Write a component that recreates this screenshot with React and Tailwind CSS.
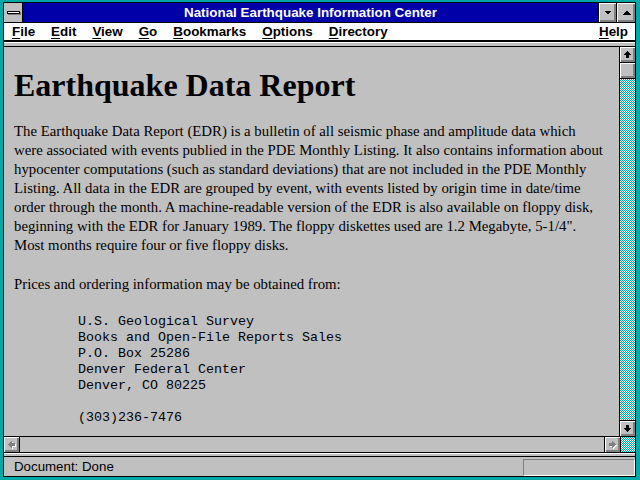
import React from 'react';

const ui = { fontFamily: '"Liberation Sans", Arial, sans-serif' };
const serif = { fontFamily: '"Liberation Serif", "Times New Roman", serif' };
const mono = { fontFamily: '"Liberation Mono", "Courier New", monospace' };

const raised = 'bg-[#c0c0c0] shadow-[inset_1px_1px_0_#ffffff,inset_-1px_-1px_0_#808080,inset_-2px_-2px_0_#808080]';
const dither = 'bg-[image:repeating-conic-gradient(#00a8a8_0%_25%,#ffffff_0%_50%)] bg-[length:2px_2px]';

const Arrow = ({ dir, disabled }) => {
  const paths = {
    up: 'M3.5 8 L7.5 4 L11.5 8 H9 V11 H6 V8 Z',
    down: 'M3.5 7 L7.5 11 L11.5 7 H9 V4 H6 V7 Z',
    left: 'M8 3.5 L4 7.5 L8 11.5 V9 H11 V6 H8 Z',
    right: 'M7 3.5 L11 7.5 L7 11.5 V9 H4 V6 H7 Z',
  };
  return (
    <svg width="15" height="15" viewBox="0 0 15 15" shapeRendering="crispEdges">
      {disabled && <path d={paths[dir]} fill="#ffffff" transform="translate(1 1)" />}
      <path d={paths[dir]} fill={disabled ? '#808080' : '#000000'} />
    </svg>
  );
};

const Tri = ({ up }) => (
  <svg width="9" height="5" viewBox="0 0 9 5" shapeRendering="crispEdges">
    <path d={up ? 'M0.5 4.5 L4.5 0.5 L8.5 4.5 Z' : 'M0.5 0.5 L4.5 4.5 L8.5 0.5 Z'} fill="#000000" />
  </svg>
);

const MenuItem = ({ k, rest }) => (
  <span className="whitespace-nowrap">
    <span className="underline underline-offset-2">{k}</span>
    {rest}
  </span>
);

const paragraph = [
  'The Earthquake Data Report (EDR) is a bulletin of all seismic phase and amplitude data which',
  'were associated with events publied in the PDE Monthly Listing. It also contains information about',
  'hypocenter computations (such as standard deviations) that are not included in the PDE Monthly',
  'Listing. All data in the EDR are grouped by event, with events listed by origin time in date/time',
  'order through the month. A machine-readable version of the EDR is also available on floppy disk,',
  'beginning with the EDR for January 1989. The floppy diskettes used are 1.2 Megabyte, 5-1/4".',
  'Most months require four or five floppy disks.',
];

const address = [
  'U.S. Geological Survey',
  'Books and Open-File Reports Sales',
  'P.O. Box 25286',
  'Denver Federal Center',
  'Denver, CO 80225',
  '\u00a0',
  '(303)236-7476',
];

export default function App() {
  return (
    <div className="w-[640px] h-[480px] bg-[#00a8a8] pt-[2px] pl-[3px] pr-[4px] pb-[3px] overflow-hidden">
      <div className="h-full border border-black flex flex-col bg-[#c0c0c0]" style={ui}>
        {/* Title bar */}
        <div className="h-[20px] shrink-0 flex border-b border-black">
          <div className="w-[19px] border-r border-black bg-[#c0c0c0] flex items-center justify-center">
            <div className="w-[13px] h-[3px] bg-white border border-black shadow-[1px_1px_0_#808080]" />
          </div>
          <div className="flex-1 bg-[#0000a8] text-white font-bold text-[13.4px] leading-[19px] text-center whitespace-nowrap">
            National Earthquake Information Center
          </div>
          <div className={`w-[18px] border-l border-black flex items-center justify-center ${raised}`}>
            <Tri />
          </div>
          <div className={`w-[19px] border-l border-black flex items-center justify-center ${raised}`}>
            <Tri up />
          </div>
        </div>

        {/* Menu bar */}
        <div className="h-[18px] shrink-0 bg-white border-b border-black flex items-center gap-[16px] pl-[8px] pr-[7px] text-[13.4px] font-bold text-black leading-[17px]">
          <MenuItem k="F" rest="ile" />
          <MenuItem k="E" rest="dit" />
          <MenuItem k="V" rest="iew" />
          <MenuItem k="G" rest="o" />
          <MenuItem k="B" rest="ookmarks" />
          <MenuItem k="O" rest="ptions" />
          <MenuItem k="D" rest="irectory" />
          <span className="ml-auto">
            <MenuItem k="H" rest="elp" />
          </span>
        </div>

        {/* Toolbar separator */}
        <div className="h-[6px] shrink-0 border-t border-black bg-[#c0c0c0] shadow-[inset_0_1px_0_#ffffff] border-b border-b-black" />

        {/* Content + vertical scrollbar */}
        <div className="flex-1 min-h-0 flex">
          <div className="flex-1 min-w-0 overflow-hidden pl-[10px] pt-[21px] text-black">
            <h1 className="text-[32px] leading-[34px] font-bold whitespace-nowrap" style={serif}>
              Earthquake Data Report
            </h1>
            <div className="mt-[20px] text-[14.8px] leading-[19px]" style={serif}>
              {paragraph.map((l, i) => (
                <div key={i} className="whitespace-nowrap">{l}</div>
              ))}
            </div>
            <div className="mt-[20px] text-[14.8px] leading-[19px] whitespace-nowrap" style={serif}>
              Prices and ordering information may be obtained from:
            </div>
            <div className="mt-[20px] ml-[64px] text-[13.33px] leading-[16px]" style={mono}>
              {address.map((l, i) => (
                <div key={i} className="whitespace-pre">{l}</div>
              ))}
            </div>
          </div>
          <div className="w-[16px] shrink-0 border-l border-black flex flex-col">
            <div className={`h-[16px] shrink-0 border-b border-black flex items-center justify-center ${raised}`}>
              <Arrow dir="up" />
            </div>
            <div className={`h-[16px] shrink-0 border-b border-black ${raised}`} />
            <div className={`flex-1 ${dither}`} />
            <div className={`h-[16px] shrink-0 border-t border-black flex items-center justify-center ${raised}`}>
              <Arrow dir="down" />
            </div>
          </div>
        </div>

        {/* Horizontal scrollbar */}
        <div className="h-[16px] shrink-0 border-t border-black flex">
          <div className={`w-[16px] border-r border-black flex items-center justify-center ${raised}`}>
            <Arrow dir="left" disabled />
          </div>
          <div className="flex-1 bg-[#c0c0c0]" />
          <div className={`w-[16px] border-l border-black flex items-center justify-center ${raised}`}>
            <Arrow dir="right" disabled />
          </div>
          <div className={`w-[15px] border-l border-black ${dither}`} />
        </div>

        {/* Status separator */}
        <div className="h-[5px] shrink-0 border-y border-black bg-[#c0c0c0] shadow-[inset_0_1px_0_#ffffff]" />

        {/* Status bar */}
        <div className="flex-1 min-h-0 max-h-[19px] h-[19px] shrink-0 flex items-start pl-[10px]">
          <div className="text-[13.3px] leading-[19px] text-black whitespace-nowrap">Document: Done</div>
          <div className="ml-auto mt-[2px] w-[112px] h-[17px] border-t border-l border-[#808080] border-r border-b border-r-white border-b-white" />
        </div>
      </div>
    </div>
  );
}
